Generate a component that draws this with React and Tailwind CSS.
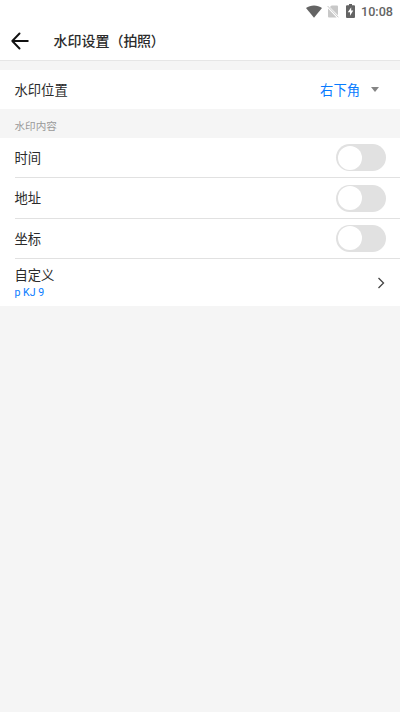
import { useState } from 'react';

const FONT = "font-[Roboto,'Noto_Sans_CJK_SC',sans-serif]";

function StatusBar() {
    return (
        <div className="flex h-[22px] items-center justify-end pr-[7px] text-[#646464]">
            <svg width="16" height="13" viewBox="0 0 16 13" fill="currentColor">
                <path d="M0 3.1C2.2 1.3 5 .4 8 .4s5.800.9 8 2.700L8 12.800z" />
            </svg>
            <svg className="ml-[5px]" width="12" height="13" viewBox="0 0 12 13">
                <path d="M4.600.5H10q1 0 1 1v8.700L2.900 2.100z" fill="#c8c8c8" />
                <path d="M1 3.400 9.600 12.400H2q-1 0-1-1z" fill="#c8c8c8" />
                <path d="M.6 1 11.400 12.300" stroke="#c8c8c8" strokeWidth="1" />
            </svg>
            <svg className="ml-[7px]" width="9" height="14" viewBox="0 0 9 14">
                <path d="M3 0h3v1.300h2q1 0 1 1V13q0 1-1 1H1q-1 0-1-1V2.300q0-1 1-1h2z" fill="currentColor" />
                <path d="M5.200 3.200 1.800 8.300H4v3.500l3.300-5.300H5.200z" fill="#fff" />
            </svg>
            <span className="ml-1.5 pt-0.5 text-[12.6px] leading-none font-medium">10:08</span>
        </div>
    );
}

function Toggle({ checked, onChange, label }) {
    return (
        <button
            role="switch"
            aria-checked={checked}
            aria-label={label}
            onClick={() => onChange(!checked)}
            className={`flex h-[27px] w-[50px] items-center rounded-full p-[1.5px] ${checked ? 'justify-end bg-[#087bff]' : 'bg-[#e1e1e1]'}`}
        >
            <span className="size-[24px] rounded-full bg-white" />
        </button>
    );
}

export default function App() {
    const [options, setOptions] = useState([
        { label: '时间', checked: false },
        { label: '地址', checked: false },
        { label: '坐标', checked: false },
    ]);

    const setChecked = (label, checked) => {
        setOptions(prev => prev.map(o => (o.label === label ? { ...o, checked } : o)));
    };

    return (
        <div className={`min-h-screen bg-[#f5f5f5] text-[13.3px] text-[#2b2b2b] ${FONT}`}>
            <header className="border-b border-[#e6e6e6] bg-white">
                <StatusBar />
                <div className="flex h-[38px] items-center pl-[11px]">
                    <svg width="18" height="18" viewBox="0 0 18 18" fill="none" stroke="#111" strokeWidth="1.900" strokeLinecap="round" strokeLinejoin="round">
                        <path d="M8.500 1.500 1.300 9l7.200 7.500M1.300 9h15.500" />
                    </svg>
                    <h1 className="ml-[24.5px] text-[14px] leading-none font-medium">
                        水印设置（<span className="tracking-[-0.4px]">拍照）</span>
                    </h1>
                </div>
            </header>

            <div className="mt-[8.5px] flex h-[39.5px] items-center justify-between bg-white pr-[21px] pl-[14.5px]">
                <span className="pt-[3px]">水印位置</span>
                <button className="flex items-center gap-[11px] text-[#087bff]">
                    <span className="pt-[3px]">右下角</span>
                    <svg width="8" height="5" viewBox="0 0 8 5" fill="#858585">
                        <path d="M0 0h8L4 5z" />
                    </svg>
                </button>
            </div>

            <div className="flex h-[29px] items-center pt-[7px] pl-[14.5px] text-[10.6px] text-[#999]">水印内容</div>

            <div className="bg-white">
                {options.map(({ label, checked }) => (
                    <div key={label} className="pl-[14.5px]">
                        <div className="flex h-[40.4px] items-center justify-between border-b border-[#e1e1e1] pr-[14px]">
                            <span className="pt-0.5">{label}</span>
                            <Toggle label={label} checked={checked} onChange={value => setChecked(label, value)} />
                        </div>
                    </div>
                ))}
                <div className="flex h-[46.8px] items-center justify-between pr-[15px] pl-[14.5px]">
                    <div className="pt-0.5">
                        <div className="leading-[18px]">自定义</div>
                        <div className="text-[10.6px] leading-[15px] text-[#087bff]">p KJ 9</div>
                    </div>
                    <svg width="8" height="12" viewBox="0 0 8 12" fill="none" stroke="#444" strokeWidth="1.300">
                        <path d="M1.500 1 6.500 6l-5 5" />
                    </svg>
                </div>
            </div>
        </div>
    );
}
